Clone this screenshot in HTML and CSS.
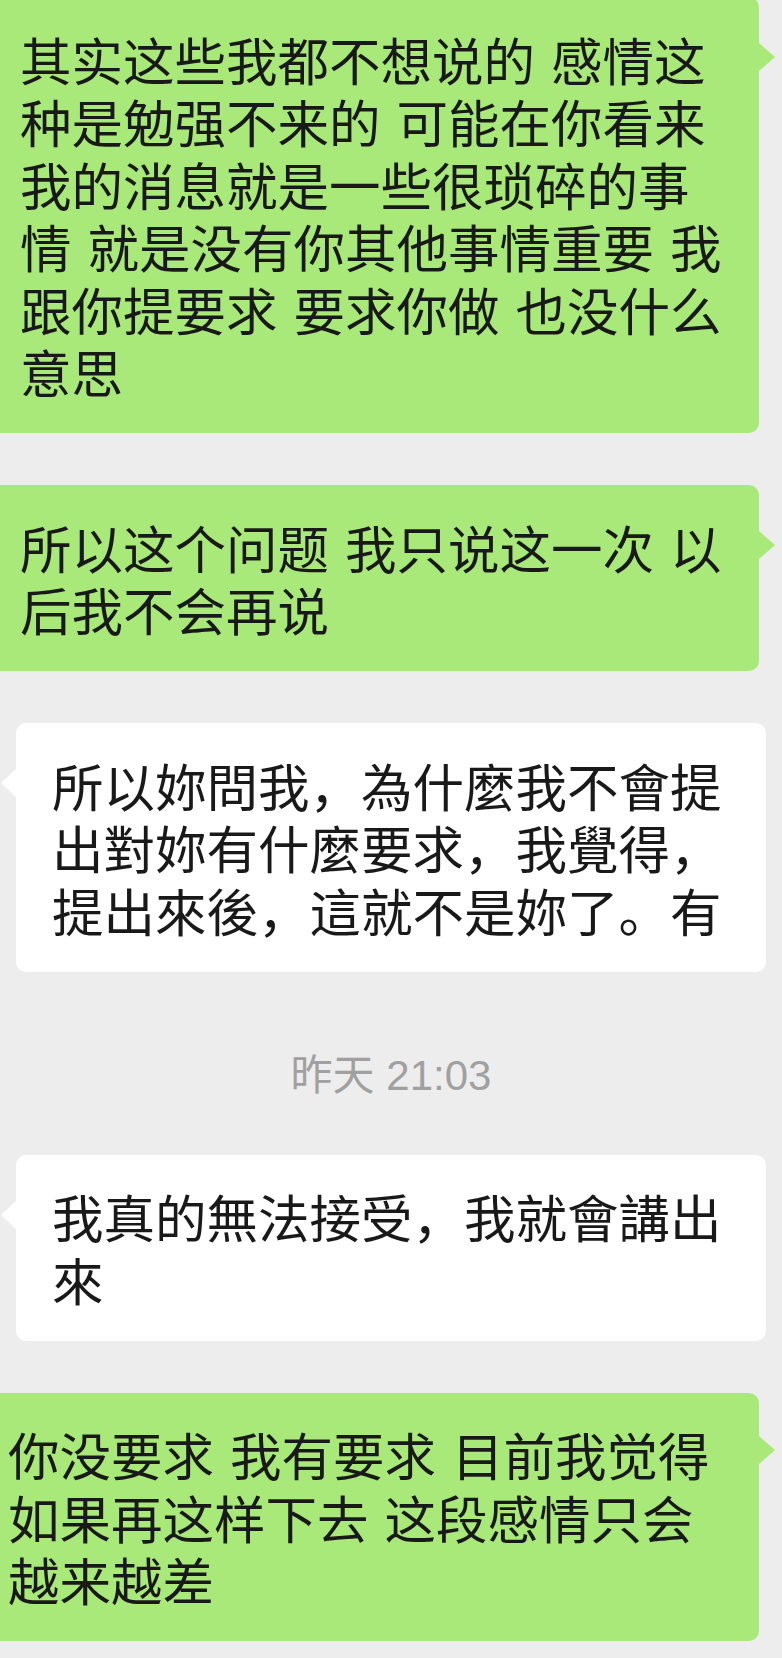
FILE: index.html
```html
<!DOCTYPE html>
<html lang="zh">
<head>
    <meta charset="UTF-8">
    <title>聊天记录</title>
    <link rel="stylesheet" href="styles.css">
</head>
<body>
    <div class="chat">
        <div class="bubble mine">其实这些我都不想说的 感情这种是勉强不来的 可能在你看来我的消息就是一些很琐碎的事情 就是没有你其他事情重要 我跟你提要求 要求你做 也没什么意思</div>

        <div class="bubble mine">所以这个问题 我只说这一次 以后我不会再说</div>

        <div class="bubble theirs">所以妳問我，為什麼我不會提出對妳有什麼要求，我覺得，提出來後，這就不是妳了。有</div>

        <div class="time">昨天 21:03</div>

        <div class="bubble theirs">我真的無法接受，我就會講出來</div>

        <div class="bubble mine wide">你没要求 我有要求 目前我觉得如果再这样下去 这段感情只会越来越差</div>
    </div>
</body>
</html>
```

FILE: styles.css
```css
body {
    margin: 0;
    background-color: #ededed;
    font-family: "Noto Sans CJK SC", sans-serif;
    overflow: hidden;
}

.chat {
    display: flex;
    flex-direction: column;
    gap: 52px;
    margin-top: -3px;
}

.bubble {
    position: relative;
    font-size: 51.5px;
    line-height: 62.5px;
    padding: 30.5px 36px;
    color: #191919;
    word-spacing: 4.5px;
}

.bubble::after {
    content: "";
    position: absolute;
    top: 46px;
    border-style: solid;
}

/* zielone - moje wiadomości */
.mine {
    background-color: #a9e97a;
    margin-right: 23px;
    padding-left: 20px;
    padding-right: 30px;
    border-radius: 0 10px 10px 0;
}

.mine::after {
    right: -16px;
    border-width: 14px 0 14px 16px;
    border-color: transparent transparent transparent #a9e97a;
}

.mine.wide {
    padding-left: 8px;
}

.mine.wide::after {
    top: 43px;
}

/* białe - odpowiedzi */
.theirs {
    background-color: white;
    margin: 0 16px;
    border-radius: 10px;
}

.theirs::after {
    left: -15px;
    border-width: 14px 15px 14px 0;
    border-color: transparent white transparent transparent;
}

.time {
    text-align: center;
    font-family: "Liberation Sans", "Noto Sans CJK SC", sans-serif;
    font-size: 42px;
    line-height: 50px;
    color: #a0a0a0;
    padding: 27px 0 2px;
}
```
